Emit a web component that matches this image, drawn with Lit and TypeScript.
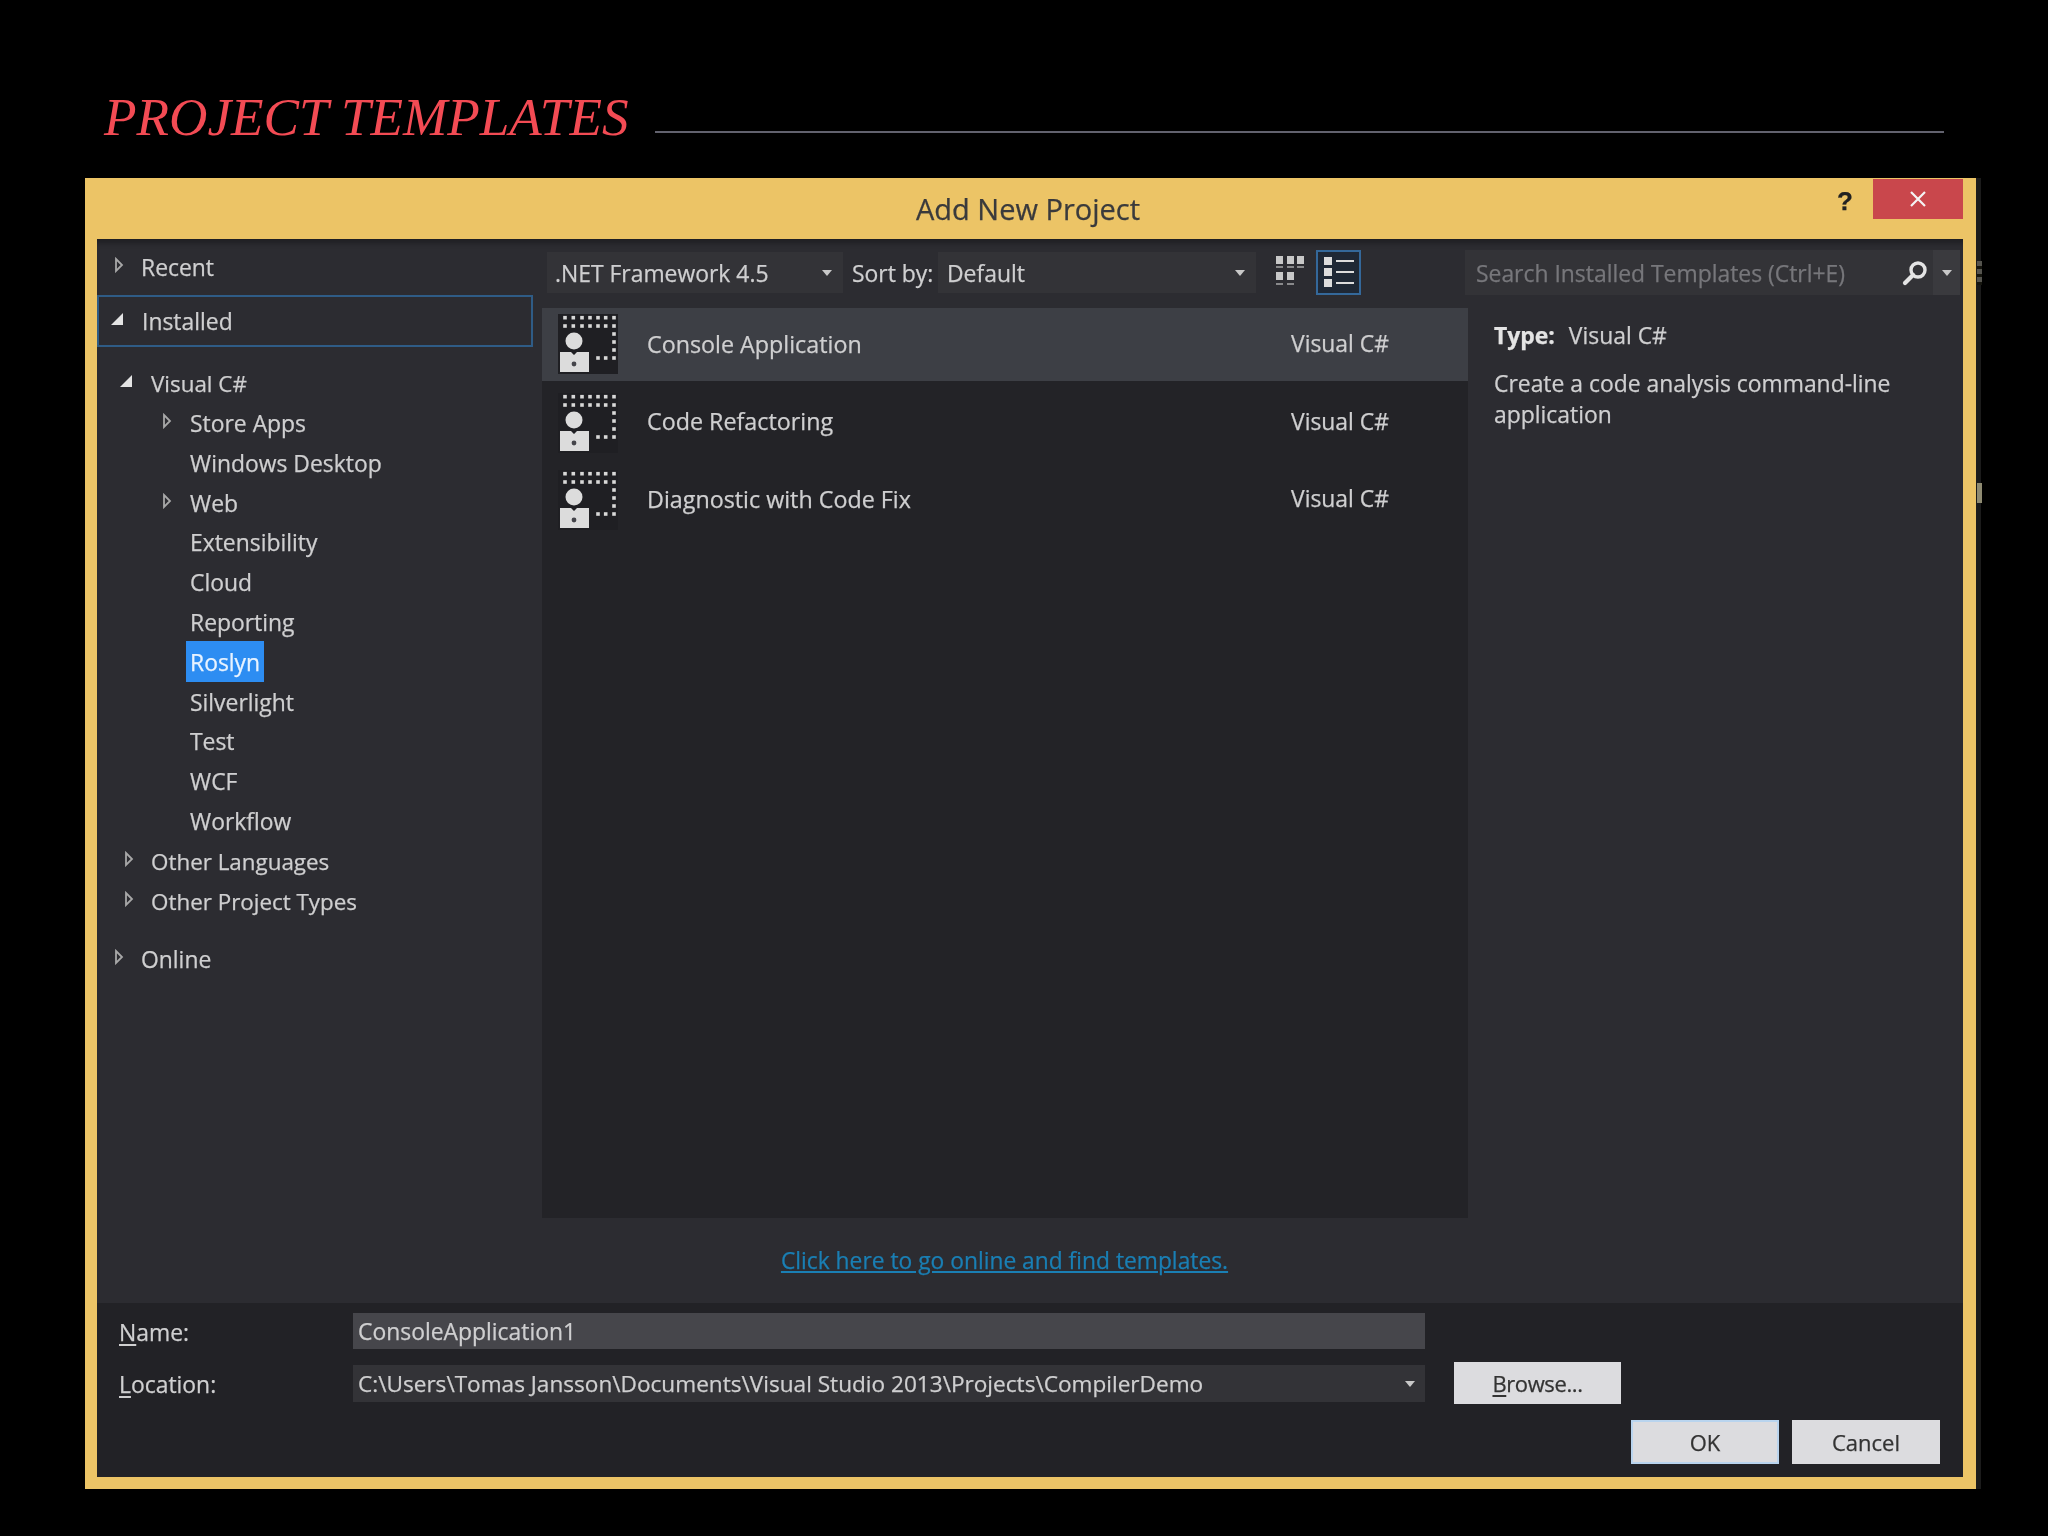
import { LitElement, html, css, svg } from "lit";
import { customElement } from "lit/decorators.js";

const icon = () => {
  const xs = [7, 15.3, 24, 32, 40, 47.7, 56];
  const dots = [] as any[];
  for (const y of [3.7, 12]) for (const x of xs) dots.push(svg`<rect x=${x - 1.8} y=${y - 1.8} width="3.6" height="3.6" fill="#d8d8d8"/>`);
  for (const y of [20, 28, 36, 44]) dots.push(svg`<rect x=${56 - 1.8} y=${y - 1.8} width="3.6" height="3.6" fill="#d8d8d8"/>`);
  for (const x of [40, 47.7]) dots.push(svg`<rect x=${x - 1.8} y="42.2" width="3.6" height="3.6" fill="#d8d8d8"/>`);
  return html`<svg class="tpl-icon" viewBox="0 0 60 60" width="60" height="60">
    <rect x="0" y="0" width="60" height="60" fill="#1f1f23"/>
    ${dots}
    <circle cx="16" cy="27" r="8.5" fill="#dcdcdc"/>
    <path d="M2 38 L13 38 L16 41 L19 38 L31 38 L31 58 L2 58 Z" fill="#dcdcdc"/>
    <circle cx="16" cy="50" r="2.4" fill="#44444a"/>
  </svg>`;
};

const closedArrow = html`<svg class="arrow cl" viewBox="0 0 10 16" width="10" height="16"><path d="M2 2 L8 8 L2 14 Z" fill="none" stroke="#a8a8a8" stroke-width="1.8"/></svg>`;
const openArrow = html`<svg class="arrow op" viewBox="0 0 14 14" width="14" height="14"><path d="M13 1 L13 13 L1 13 Z" fill="#e4e4e4"/></svg>`;
const caret = html`<svg class="caret" viewBox="0 0 10 6" width="10" height="6"><path d="M0 0 L10 0 L5 6 Z" fill="#c8c8c8"/></svg>`;

@customElement("app-root")
export class AppRoot extends LitElement {
  static styles = css`
    :host { display: block; width: 2048px; height: 1536px; background: #000; overflow: hidden;
      font-family: "Open Sans", "Liberation Sans", sans-serif; color: #cfcfd0; font-size: 22.9px; }
    .page { display: flex; flex-direction: column; width: 2048px; height: 1536px; filter: blur(0.7px); -webkit-text-stroke: 0.25px currentColor; }
    .header { height: 178px; box-sizing: border-box; display: flex; align-items: flex-start; padding-left: 104px; }
    .h-title { font-family: "Liberation Serif", serif; font-style: italic; font-size: 53.2px; line-height: 60px; margin-top: 88px; color: #f34b54; white-space: nowrap; -webkit-text-stroke: 0; }
    .h-line { height: 2px; background: #62626e; flex: none; width: 1289px; margin-top: 131px; margin-left: 26px; }
    .dialog { position: relative; box-sizing: border-box; margin-left: 85px; width: 1891px; height: 1311px; background: #ecc466; box-shadow: 5px 0 0 #1b1b1b; display: flex; flex-direction: column; }
    .mark { position: absolute; left: 1892px; width: 5px; background: #6f6c60; }
    .m1 { top: 83px; height: 24px; background: repeating-linear-gradient(#55544e 0 5px, #16160f 5px 8px); }
    .m2 { top: 305px; height: 20px; background: #8f8b72; }
    .titlebar { height: 61px; flex: none; box-sizing: border-box; padding-right: 13px; display: grid; grid-template-columns: 1fr auto 1fr; }
    .titlebar .t { color: #3a3a3c; font-size: 29px; padding-top: 12px; line-height: 38px; margin-left: 8px; }
    .ctl { display: flex; justify-content: flex-end; align-items: flex-start; }
    .help { font-family: "Liberation Sans", sans-serif; font-weight: 700; font-size: 26px; color: #222; margin-right: 20px; margin-top: 8px; }
    .close { width: 90px; height: 40px; margin-top: 1px; background: #c9474c; display: flex; align-items: center; justify-content: center; }
    .body { margin: 0 13px 12px 12px; flex: 1; background: #2c2c31; display: flex; flex-direction: column; min-height: 0; box-shadow: inset 0 7px 5px -3px #1f1f23; }
    .upper { height: 1064px; flex: none; display: grid; grid-template-columns: 445px 926px 495px; }
    .tree { padding-top: 8px; box-sizing: border-box; white-space: nowrap; }
    .row { box-sizing: border-box; height: 39.8px; padding-top: 2px; display: flex; align-items: center; }
    .row .slot { width: 24px; flex: none; display: flex; align-items: center; margin-top: -5px; }
    .cl { margin-left: -3px; margin-right: 3px; }
    .op { margin-left: -8px; margin-right: 8px; }
    .lv0 { padding-left: 20px; } .lv1 { padding-left: 30px; font-size: 22.4px; } .lv2 { padding-left: 69px; }
    .lv2 .slot { margin-left: -1px; margin-right: 1px; }
    .installed { height: 52px; width: 436px; border: 2px solid #2f5c86; margin-top: 8px; margin-bottom: 16px; padding-left: 19px; }
    .online { margin-top: 19px; }
    .sel { background: #2d8df2; color: #e8f3ff; height: 41px; line-height: 43px; padding: 0 4px; margin-left: -4px; margin-top: -2px; }
    .mid { display: flex; flex-direction: column; }
    .toolbar { height: 66px; margin-bottom: 3px; display: flex; align-items: center; padding-left: 5px; white-space: nowrap; }
    .combo { box-sizing: border-box; height: 41px; background: #333337; display: flex; align-items: center; justify-content: space-between; padding: 2px 11px 0 8px; }
    .c1 { width: 296px; } .c2 { width: 318px; margin-left: 8px; padding-left: 9px; }
    .sort { margin-left: 9px; width: 78px; margin-top: 2px; }
    .grid-ic { margin-left: 20px; }
    .list-ic { box-sizing: border-box; margin-left: 12px; width: 45px; height: 45px; border: 2px solid #34689a; background: #1f2835; display: flex; align-items: center; justify-content: center; }
    .list { height: 910px; flex: none; background: #232327; }
    .tpl { height: 77.5px; display: flex; align-items: center; padding-left: 16px; font-size: 23.3px; }
    .tpl.on { background: #3d3f45; height: 73px; box-sizing: border-box; padding-bottom: 2px; margin-bottom: 3px; }
    .tpl-icon { flex: none; }
    .tpl .n { margin-left: 29px; width: 644px; margin-top: -3px; }
    .tpl .l { margin-top: -3px; font-size: 22.9px; }
    .tpl.on .n, .tpl.on .l { margin-top: 0; }
    .link-wrap { flex: 1; display: flex; align-items: center; justify-content: center; padding-bottom: 1px; }
    .link { color: #1a7fb4; text-decoration: underline; font-size: 22.8px; margin-left: -1px; }
    .right { padding-top: 11px; }
    .search { box-sizing: border-box; height: 45px; width: 495px; margin-left: -3px; background: #333337; display: flex; align-items: center; padding-left: 11px; color: #77777b; white-space: nowrap; }
    .search .ph { flex: 1; margin-top: 1px; }
    .search .mag { margin-right: 5px; }
    .search .dd { width: 27px; height: 45px; background: #3a3a3e; display: flex; align-items: center; justify-content: center; }
    .info { padding: 24px 26px 0 26px; }
    .type { line-height: 34px; }
    .type b { color: #e4e4e4; margin-right: 14px; font-weight: 700; }
    .desc { margin-top: 15px; line-height: 31px; }
    .bottom { flex: 1; background: #222226; padding: 10px 23px 0 22px; display: flex; flex-direction: column; }
    .frow { display: grid; grid-template-columns: 234px 1072px auto; align-items: center; }
    .frow .lbl { padding-top: 2px; }
    .r1 { height: 36px; margin-bottom: 13px; }
    .r2 { height: 42px; }
    u { text-underline-offset: 3px; }
    .inp { box-sizing: border-box; height: 36px; background: #46464b; padding-left: 5px; line-height: 38px; white-space: nowrap; }
    .inp.loc { height: 37px; background: #333337; display: flex; align-items: center; justify-content: space-between; padding-right: 10px; padding-top: 2px; font-size: 22.6px; }
    .btn { box-sizing: border-box; background: #dcdcdf; color: #333; display: flex; align-items: center; justify-content: center; font-size: 22px; }
    .browse { width: 167px; height: 42px; margin-left: 29px; letter-spacing: -0.4px; }
    .actions { display: flex; justify-content: flex-end; gap: 13px; margin-top: 16px; }
    .ok, .cancel { width: 148px; height: 44px; }
    .ok { border: 2px solid #b9d4ee; }
  `;

  render() {
    const lv2: [string, boolean, boolean][] = [
      ["Store Apps", true, false], ["Windows Desktop", false, false], ["Web", true, false],
      ["Extensibility", false, false], ["Cloud", false, false], ["Reporting", false, false],
      ["Roslyn", false, true], ["Silverlight", false, false], ["Test", false, false],
      ["WCF", false, false], ["Workflow", false, false],
    ];
    const tpls = ["Console Application", "Code Refactoring", "Diagnostic with Code Fix"];
    return html`<div class="page">
      <div class="header"><div class="h-title">PROJECT TEMPLATES</div><div class="h-line"></div></div>
      <div class="dialog">
        <div class="mark m1"></div><div class="mark m2"></div>
        <div class="titlebar">
          <div></div><div class="t">Add New Project</div>
          <div class="ctl"><div class="help">?</div><div class="close">
            <svg viewBox="0 0 16 16" width="16" height="16"><path d="M1 1 L15 15 M15 1 L1 15" stroke="#f4f4f4" stroke-width="2.2"/></svg>
          </div></div>
        </div>
        <div class="body">
          <div class="upper">
            <div class="tree">
              <div class="row lv0"><span class="slot">${closedArrow}</span>Recent</div>
              <div class="row installed"><span class="slot">${openArrow}</span>Installed</div>
              <div class="row lv1"><span class="slot">${openArrow}</span>Visual C#</div>
              ${lv2.map(([t, a, s]) => html`<div class="row lv2"><span class="slot">${a ? closedArrow : ""}</span>${s ? html`<span class="sel">${t}</span>` : t}</div>`)}
              <div class="row lv1"><span class="slot">${closedArrow}</span>Other Languages</div>
              <div class="row lv1"><span class="slot">${closedArrow}</span>Other Project Types</div>
              <div class="row lv0 online"><span class="slot">${closedArrow}</span>Online</div>
            </div>
            <div class="mid">
              <div class="toolbar">
                <div class="combo c1"><span>.NET Framework 4.5</span>${caret}</div>
                <span class="sort">Sort by:</span>
                <div class="combo c2"><span>Default</span>${caret}</div>
                <svg class="grid-ic" viewBox="0 0 28 32" width="28" height="32" fill="#c8c8c8">
                  <rect x="0" y="0" width="7" height="8"/><rect x="11" y="0" width="7" height="8"/><rect x="21" y="0" width="7" height="8"/>
                  <rect x="0" y="10" width="7" height="2" opacity=".6"/><rect x="11" y="10" width="7" height="2" opacity=".6"/><rect x="21" y="10" width="7" height="2" opacity=".6"/>
                  <rect x="0" y="16" width="7" height="8"/><rect x="11" y="16" width="7" height="8"/>
                  <rect x="0" y="27" width="7" height="2" opacity=".6"/><rect x="11" y="27" width="7" height="2" opacity=".6"/>
                </svg>
                <div class="list-ic">
                  <svg viewBox="0 0 30 30" width="30" height="30"><g fill="#dcdcdc"><rect x="0" y="0" width="8" height="8"/><rect x="0" y="11" width="8" height="8"/><rect x="0" y="22" width="8" height="8"/><rect x="12" y="3" width="18" height="2"/><rect x="12" y="14" width="18" height="2"/><rect x="12" y="25" width="18" height="2"/></g></svg>
                </div>
              </div>
              <div class="list">
                ${tpls.map((t, i) => html`<div class="tpl ${i === 0 ? "on" : ""}">${icon()}<span class="n">${t}</span><span class="l">Visual C#</span></div>`)}
              </div>
              <div class="link-wrap"><span class="link">Click here to go online and find templates.</span></div>
            </div>
            <div class="right">
              <div class="search"><span class="ph">Search Installed Templates (Ctrl+E)</span>
                <svg class="mag" viewBox="0 0 26 26" width="26" height="26"><circle cx="16" cy="10" r="7" fill="none" stroke="#e4e4e4" stroke-width="3.4"/><path d="M11 15 L3 23" stroke="#e4e4e4" stroke-width="4.2" stroke-linecap="round"/></svg>
                <span class="dd">${caret}</span>
              </div>
              <div class="info">
                <div class="type"><b>Type:</b>Visual C#</div>
                <div class="desc">Create a code analysis command-line application</div>
              </div>
            </div>
          </div>
          <div class="bottom">
            <div class="frow r1"><span class="lbl"><u>N</u>ame:</span><div class="inp">ConsoleApplication1</div></div>
            <div class="frow r2"><span class="lbl"><u>L</u>ocation:</span><div class="inp loc"><span>C:\\Users\\Tomas Jansson\\Documents\\Visual Studio 2013\\Projects\\CompilerDemo</span>${caret}</div><div class="btn browse"><span><u>B</u>rowse...</span></div></div>
            <div class="actions"><div class="btn ok">OK</div><div class="btn cancel">Cancel</div></div>
          </div>
        </div>
      </div>
    </div>`;
  }
}
